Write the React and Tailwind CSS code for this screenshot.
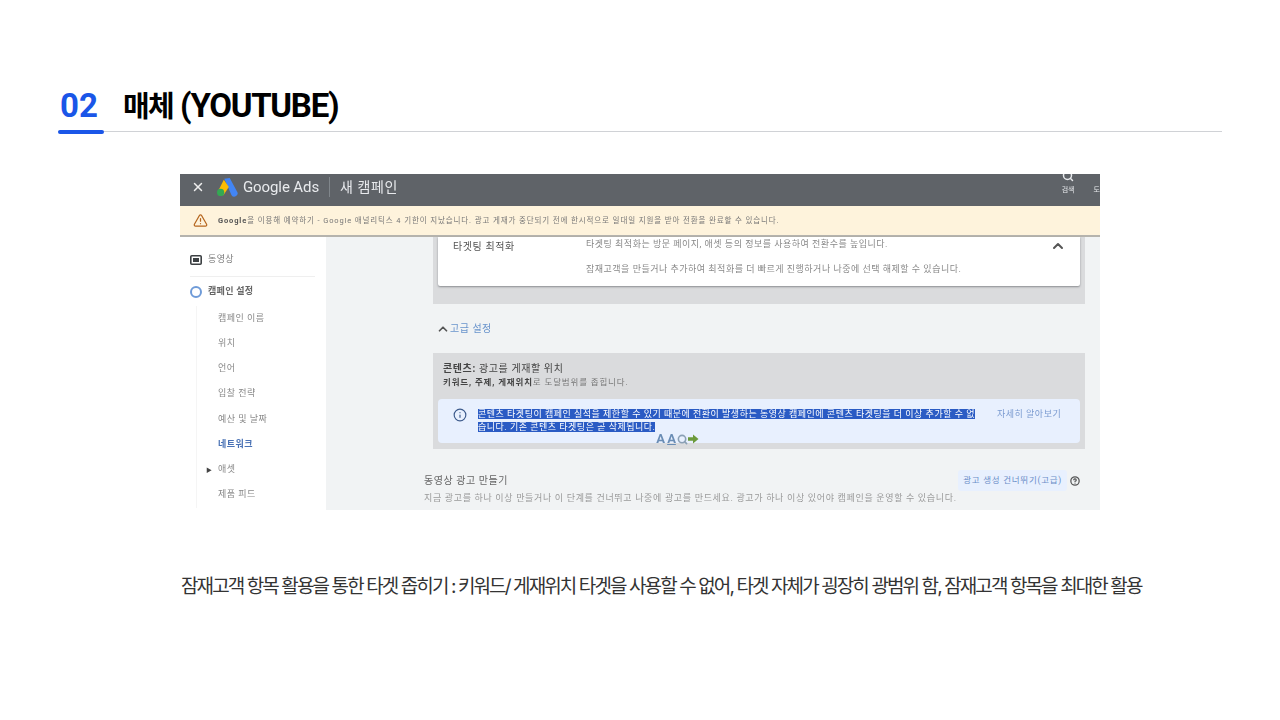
import React from 'react';
import { X, Search, ChevronUp, Info, CircleHelp, TriangleAlert } from 'lucide-react';

const font = "font-['Inter','Noto_Sans_CJK_KR',sans-serif]";
const shot = "font-['Roboto','Noto_Sans_CJK_KR',sans-serif]";

const navItems = ['캠페인 이름', '위치', '언어', '입찰 전략', '예산 및 날짜', '네트워크', '애셋', '제품 피드'];

const GoogleAdsLogo = () => (
  <svg viewBox="0 0 24 22" className="w-[22px] h-[20px]">
    <path d="M9 2 L15 1 L23 16 A3.6 3.6 0 0 1 17 20 Z" fill="#4285f4" />
    <path d="M8.5 3 L14 11 L8 20 L2 16 Z" fill="#fbbc04" />
    <circle cx="5" cy="17" r="4" fill="#34a853" />
  </svg>
);

const VideoBox = () => (
  <svg viewBox="0 0 12 10" className="w-[12px] h-[10px]">
    <rect x="0.8" y="0.8" width="10.4" height="8.4" rx="1" fill="none" stroke="#3c4043" strokeWidth="1.6" />
    <rect x="3" y="3" width="6" height="4" fill="#3c4043" />
  </svg>
);

const ArrowGlyph = () => (
  <svg viewBox="0 0 11 10" className="w-[11px] h-[10px]">
    <path d="M0 3.2 H5 V0.5 L10.5 5 L5 9.5 V6.8 H0 Z" fill="#6c9a3c" />
  </svg>
);

const Sidebar = () => (
  <div className="w-[146px] shrink-0 bg-white pl-[10px] pt-[1px]">
    <div className="h-[39px] flex items-center border-b border-[#efefef] w-[125px] pt-[5px]">
      <VideoBox />
      <span className="ml-[6px] text-[9px] text-[#777] tracking-[0.4px]">동영상</span>
    </div>
    <div className="h-[29px] pt-[1px] flex items-center">
      <span className="w-[12px] h-[12px] rounded-full border-2 border-[#6f9bd8]" />
      <span className="ml-[6px] text-[9px] font-bold text-[#666] tracking-[0.3px]">캠페인 설정</span>
    </div>
    <div className="ml-[6px] border-l border-[#f5f5f5] pl-[21px]">
      {navItems.map((item, i) => (
        <div
          key={item}
          className={`relative h-[25.2px] flex items-center text-[9px] tracking-[0.5px] ${i === 5 ? 'text-[#4a72b5] font-bold' : 'text-[#888]'}`}
        >
          {i === 6 && <span className="absolute left-[-12px] text-[6px] text-[#444]">▶</span>}
          {item}
        </div>
      ))}
    </div>
  </div>
);

const MainPanel = () => (
  <div className="flex-1 bg-[#f1f3f4] min-w-0 pl-[107px] pr-[15px]">
    <div className="bg-[#dadbdd] h-[67px] px-[5px]">
      <div className="bg-white h-[49px] rounded-b-[2px] shadow-[0_1px_2px_rgba(60,64,67,0.5)] flex pl-[15px] pr-[14px]">
        <div className="w-[133px] pt-[2px] text-[10px] text-[#555] tracking-[0.6px]">타겟팅 최적화</div>
        <div className="flex-1 pt-[1px] text-[9px] text-[#888] leading-[12px] tracking-[0.5px]">
          <p>타겟팅 최적화는 방문 페이지, 애셋 등의 정보를 사용하여 전환수를 높입니다.</p>
          <p className="mt-[13px]">잠재고객을 만들거나 추가하여 최적화를 더 빠르게 진행하거나 나중에 선택 해제할 수 있습니다.</p>
        </div>
        <ChevronUp className="w-[16px] h-[16px] mt-[1px] text-[#555]" strokeWidth={3} />
      </div>
    </div>
    <div className="h-[49px] flex items-center text-[10px] text-[#6a94cc] tracking-[0.5px]">
      <ChevronUp className="ml-[3px] mr-[0px] w-[14px] h-[14px] text-[#555]" strokeWidth={3} />
      <span>고급 설정</span>
    </div>
    <div className="bg-[#dadbdd] h-[96px] px-[5px] pt-[10px]">
      <p className="ml-[5px] text-[10px] leading-[12px] text-[#444] tracking-[0.6px]"><b>콘텐츠:</b> 광고를 게재할 위치</p>
      <p className="ml-[5px] text-[8.5px] leading-[14px] text-[#777] tracking-[0.85px]"><b className="text-[#444]">키워드, 주제, 게재위치</b>로 도달범위를 좁힙니다.</p>
      <div className="relative mt-[10px] h-[44px] rounded-[4px] bg-[#e8f0fe] flex pl-[15px] pt-[9px]">
        <Info className="w-[14px] h-[14px] text-[#3c5a8c]" />
        <p className="ml-[11px] w-[500px] whitespace-nowrap text-[9px] leading-[13px] text-white tracking-[0.5px]">
          <span className="bg-[#2a5bc4]">콘텐츠 타겟팅이 캠페인 실적을 제한할 수 있기 때문에 전환이 발생하는 동영상 캠페인에 콘텐츠 타겟팅을 더 이상 추가할 수 없</span>
          <br />
          <span className="bg-[#2a5bc4]">습니다. 기존 콘텐츠 타겟팅은 곧 삭제됩니다.</span>
        </p>
        <span className="ml-[19px] text-[9px] leading-[13px] text-[#7a9ad0] tracking-[0.5px]">자세히 알아보기</span>
        <div className="absolute left-[217px] top-[34px] flex items-center h-[12px]">
          <span className="w-[11px] text-center text-[13px] leading-[12px] font-bold text-[#6a8db5]">A</span>
          <span className="w-[11px] text-center text-[13px] leading-[12px] font-bold text-[#6a8db5] underline">A</span>
          <Search className="w-[11px] h-[11px] text-[#8aa0b5]" strokeWidth={3.5} />
          <ArrowGlyph />
        </div>
      </div>
    </div>
    <div className="-ml-[9px] -mr-[5px] relative h-[61px]">
      <p className="pt-[25px] text-[10px] leading-[14px] text-[#666] tracking-[0.55px]">동영상 광고 만들기</p>
      <p className="pt-[4px] text-[9px] leading-[12px] text-[#999] tracking-[0.67px] whitespace-nowrap">지금 광고를 하나 이상 만들거나 이 단계를 건너뛰고 나중에 광고를 만드세요. 광고가 하나 이상 있어야 캠페인을 운영할 수 있습니다.</p>
      <div className="absolute right-[0px] top-[21px] flex items-center">
        <span className="bg-[#e8f0fe] rounded-[3px] h-[21px] px-[5px] flex items-center text-[8.5px] text-[#6a8ec8] tracking-[0.75px]">광고 생성 건너뛰기(고급)</span>
        <CircleHelp className="ml-[3px] mr-[10px] w-[10px] h-[10px] text-[#555]" strokeWidth={3} />
      </div>
    </div>
  </div>
);

export default function App() {
  return (
    <div className={`w-[1280px] h-[720px] overflow-hidden bg-white ${font}`}>
      <div className="mx-[58px] pt-[85px] relative border-b border-[#d0d2d6] h-[132px]">
        <div className="flex items-center h-[42px] font-['Roboto','Noto_Sans_CJK_KR',sans-serif]">
          <span className="w-[65px] pl-[2px] text-[33px] leading-[42px] font-bold text-[#1a56e8]">02</span>
          <h1 className="text-[33px] leading-[42px] font-bold text-black tracking-[-1.25px]">
            <span className="text-[29px] tracking-[-1.6px]">매체</span> (YOUTUBE)
          </h1>
        </div>
        <span className="absolute left-0 bottom-[-3px] w-[46px] h-[4px] rounded-full bg-[#1a56e8]" />
      </div>

      <div className={`ml-[180px] mt-[42px] w-[920px] h-[336px] overflow-hidden blur-[0.5px] ${shot}`}>
        <div className="h-[32px] bg-[#5f6368] flex items-center pl-[11px] relative">
          <div className="flex items-center pb-[9px] pt-[3px]">
            <X className="w-[14px] h-[14px] text-[#eee]" strokeWidth={2.5} />
            <span className="ml-[11px] -mt-[1px]"><GoogleAdsLogo /></span>
            <span className="ml-[5px] text-[15px] text-[#e8eaed] tracking-[-0.1px]">Google Ads</span>
            <span className="ml-[10px] w-px h-[20px] bg-[#80868b]" />
            <span className="ml-[10px] text-[14px] text-[#e8eaed] tracking-[0.6px]">새 캠페인</span>
          </div>
          <div className="ml-auto flex items-start self-start h-[32px] text-[7px] text-[#e8eaed] overflow-hidden">
            <div className="flex flex-col items-center -mt-[4px]">
              <Search className="w-[12px] h-[12px]" strokeWidth={3} />
              <span className="mt-[3px] leading-[10px]">검색</span>
            </div>
            <span className="ml-[19px] mt-[11px] leading-[10px]">도</span>
          </div>
        </div>
        <div className="h-[31px] bg-[#fef3dc] flex items-center pl-[13px] border-b-2 border-[#b5b3ad]">
          <TriangleAlert className="w-[15px] h-[15px] text-[#b5651d]" />
          <span className="ml-[10px] text-[7.5px] text-[#777] tracking-[0.87px] whitespace-nowrap"><b className="text-[#555]">Google</b>을 이용해 예약하기 - Google 애널리틱스 4 기한이 지났습니다. 광고 게재가 중단되기 전에 한시적으로 일대일 지원을 받아 전환을 완료할 수 있습니다.</span>
        </div>
        <div className="flex h-[273px]">
          <Sidebar />
          <MainPanel />
        </div>
      </div>

      <p className="mt-[63px] pl-[181px] text-[19px] leading-[28px] text-[#333] tracking-[-1.9px] whitespace-nowrap">
        잠재고객 항목 활용을 통한 타겟 좁히기 : 키워드/ 게재위치 타겟을 사용할 수 없어, 타겟 자체가 굉장히 광범위 함, 잠재고객 항목을 최대한 활용
      </p>
    </div>
  );
}
